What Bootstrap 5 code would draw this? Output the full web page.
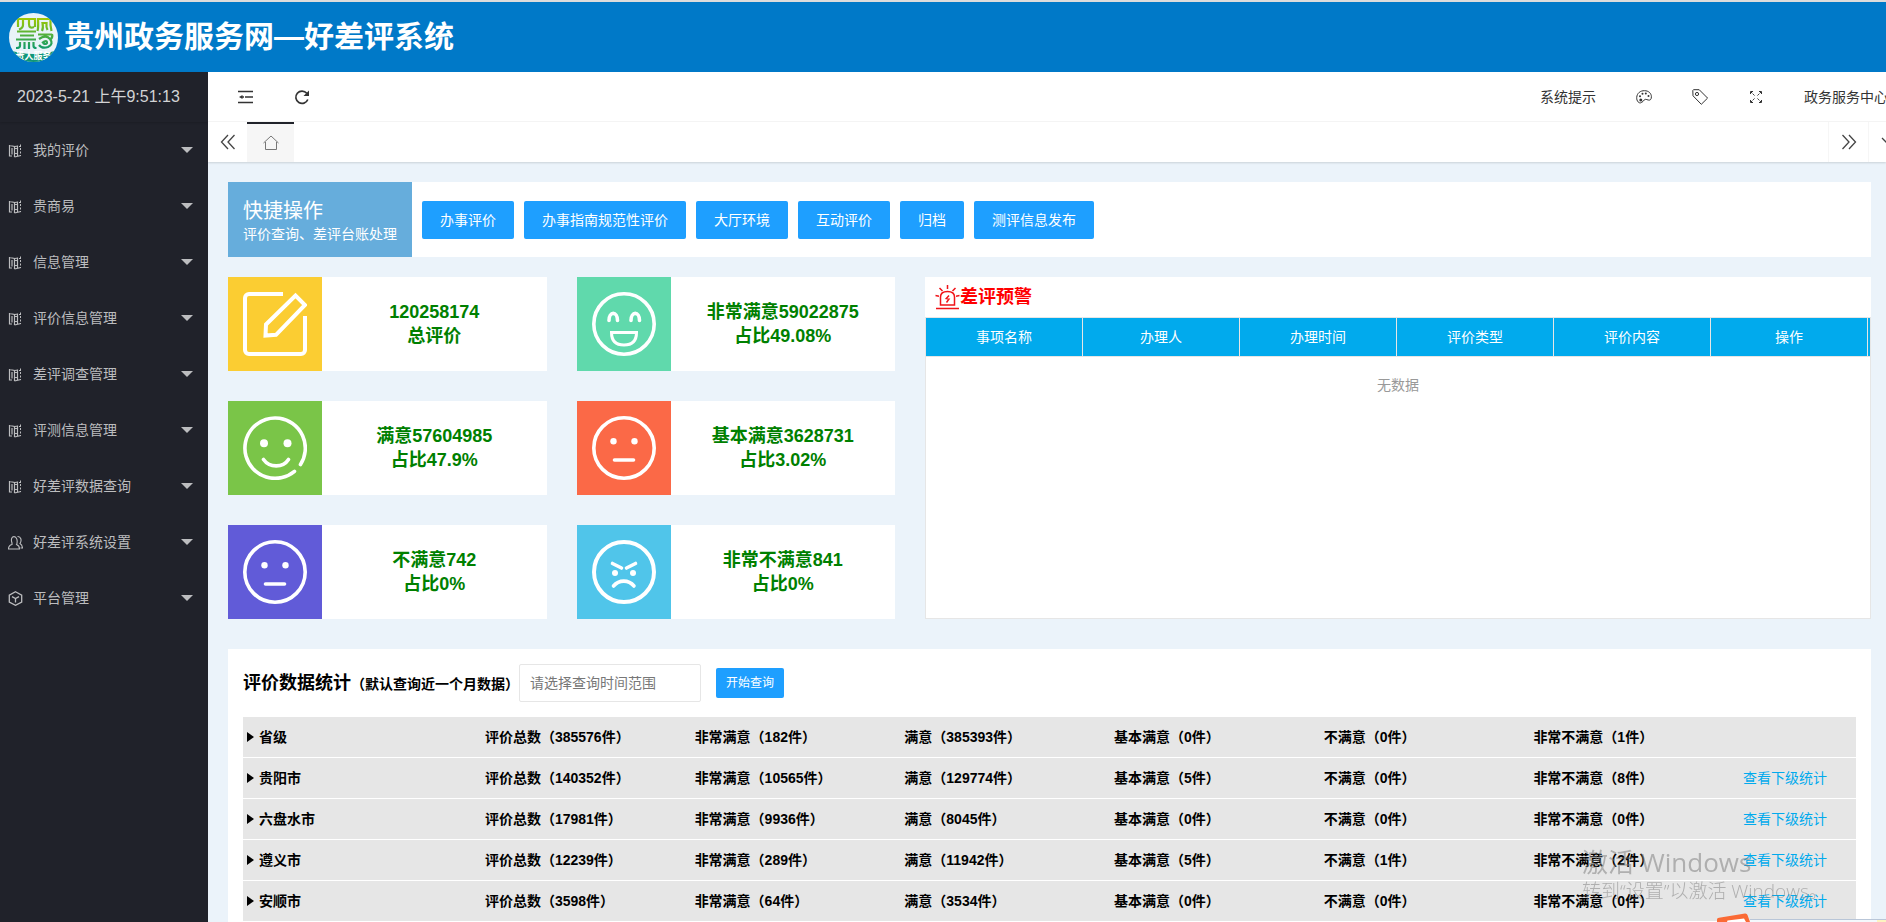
<!DOCTYPE html>
<html lang="zh-CN">
<head>
<meta charset="utf-8">
<meta name="viewport" content="width=device-width, initial-scale=1">
<title>贵州政务服务网—好差评系统</title>
<link rel="stylesheet" href="https://cdn.jsdelivr.net/npm/bootstrap@5.3.0/dist/css/bootstrap.min.css">
<script src="https://cdn.jsdelivr.net/npm/bootstrap@5.3.0/dist/js/bootstrap.bundle.min.js"></script>
<style>
body { font: 14px/24px "Liberation Sans", "Noto Sans CJK SC", sans-serif; color: #333; background: #ebf3fa; overflow-x: hidden; }
a { text-decoration: none; color: inherit; }
svg { display: block; flex-shrink: 0; }
.line-icon { fill: none; stroke: currentColor; stroke-width: 1; }

.site-head { height: 72px; background: #0079c8; color: #fff; border-top: 2px solid #dcdcdc; padding-left: 9px; gap: 6px; }
.site-title { font-size: 30px; line-height: 40px; font-weight: 700; }

.side { width: 208px; background: #20222a; color: #bcbdbf; }
.clock { height: 50px; padding: 0 17px; font-size: 16px; line-height: 50px; color: #d2d3d4; box-shadow: 0 1px 2px rgba(0,0,0,.15); }
.menu-link { height: 56px; padding: 0 15px 0 8px; color: inherit; }
.menu-link .line-icon { width: 15px; height: 15px; margin-right: 10px; }
.caret { border: 6px solid transparent; border-top-color: #bcbdbf; border-bottom: 0; }

.topbar { height: 50px; padding-left: 10px; background: #fff; border-bottom: 1px solid #f6f6f6; }
.tool-link { width: 56px; }
.user-link { width: 102px; padding-left: 20px; }
.tabs-row { height: 40px; background: #fff; box-shadow: 0 1px 2px rgba(0,0,0,.14); color: #444; }
.tab-arrow { width: 39px; }
.tab-home { width: 47px; background: #f6f6f6; border-top: 2px solid #20222a; color: #777; }
.tab-side { width: 40px; border-left: 1px solid #f6f6f6; }
.tab-cut { width: 18px; padding-left: 12px; border-left: 1px solid #f6f6f6; }

.content-area { padding: 20px 15px 0 20px; }
.quick-head { width: 184px; height: 75px; padding: 3px 15px 0; background: #66addc; color: #fff; line-height: 20px; }
.quick-head h2 { font-size: 20px; line-height: 26px; font-weight: 400; }
.quick-list { gap: 10px; margin-left: 10px; }
.btn-quick { --bs-btn-bg: #1e9fff; --bs-btn-color: #fff; --bs-btn-hover-bg: #4bb2ff; --bs-btn-hover-color: #fff; --bs-btn-border-width: 0; --bs-btn-border-radius: 2px; --bs-btn-font-size: 14px; --bs-btn-padding-x: 18px; --bs-btn-padding-y: 0; --bs-btn-line-height: 38px; }
.btn-query { --bs-btn-font-size: 12px; --bs-btn-padding-x: 10px; --bs-btn-line-height: 30px; margin-left: 15px; }

.board { display: grid; grid-template-columns: 100fr 100fr 297fr; gap: 30px; margin-top: 20px; }
.stat-card { height: 94px; background: #fff; }
.stat-icon { width: 94px; padding: 15px; }
.stat-icon svg { width: 64px; height: 64px; fill: none; stroke: #fff; stroke-width: 3.6; stroke-linecap: round; }
.stat-icon .dot { fill: #fff; stroke: none; }
.stat-text { font-size: 18px; line-height: 24px; font-weight: 700; color: green; text-align: center; }
.c-yellow { background: #fbcd32; } .c-mint { background: #60d9ac; } .c-green { background: #7ac548; }
.c-orange { background: #fb6947; } .c-violet { background: #615bd8; } .c-sky { background: #50c5ea; }

.alert-panel { grid-column: 3; grid-row: 1 / span 3; background: #fff; }
.alert-title { height: 40px; padding: 0 10px; font-size: 18px; font-weight: 700; color: #f00; }
.alert-box { border: 1px solid #e6e6e6; }
.alert-table { width: 100%; table-layout: fixed; border-collapse: separate; border-spacing: 0; }
.alert-table th { height: 39px; background: #01aaed; color: #fff; font-weight: 400; text-align: center; padding: 0; border-right: 1px solid #e6e6e6; border-bottom: 1px solid #e6e6e6; }
.alert-table .patch { width: 2px; border-right: 0; }
.no-data { padding-top: 16px; color: #999; text-align: center; }

.report { margin-top: 30px; padding: 15px 15px 0; background: #fff; color: #000; }
.report h2 { font-size: 18px; line-height: 24px; font-weight: 700; }
.report h2 span { font-size: 14px; }
.date-input { width: 182px; height: 38px; border: 1px solid #e6e6e6; border-radius: 2px; padding: 0 10px; font-size: 14px; color: #333; }
.date-input::placeholder { color: #777; opacity: 1; }
.area-table { width: 100%; margin-top: 15px; table-layout: fixed; border-collapse: separate; border-spacing: 0; background: #e6e6e6; }
.area-table th, .area-table td { height: 41px; width: 13%; padding: 0; border-bottom: 1px solid #fff; font-weight: 700; white-space: nowrap; }
.area-table th { width: 15%; padding-left: 4px; }
.area-table td:last-child { width: 7%; font-weight: 400; color: #01aaed; }
.area-table th::before { content: ""; display: inline-block; border: 5px solid transparent; border-left: 7px solid #000; border-right: 0; margin-right: 5px; }

.activate { position: fixed; right: 68px; bottom: 19px; width: 236px; color: rgba(120,120,120,.5); font-family: "Open Sans", "Noto Sans CJK SC", sans-serif; font-size: 19px; line-height: 24px; font-weight: 300; white-space: nowrap; pointer-events: none; }
.activate strong { display: block; font-size: 26px; line-height: 34px; font-weight: 400; }
.dock { position: fixed; right: 0; bottom: 0; width: 170px; height: 9px; pointer-events: none; }
</style>
</head>
<body class="min-vh-100 d-flex flex-column">

<svg class="d-none">
  <symbol id="i-book" viewBox="0 0 15 15"><path d="M1.500 2v11h2.500M1.500 2.500l5 1v10.500M6.500 14l6.500-1.500M7 3.500l2.500-.5M4 5v6.500M6 5.500h3.500v5H6M9.500 2.500v10.500" stroke-width="1.200"/><path d="M12.500 1.500v11.500M11 3.500h2" stroke-dasharray="2 1.500"/></symbol>
  <symbol id="i-user" viewBox="0 0 15 15"><path d="M4 8c-3-8.500 6.500-8.500 5 0 0 1-.2 1-.5 1.500 2 .7 3 2 3 4.500H.500c0-2.500 1.500-4 3.500-4.500zM9.500 1.500c3.500-.3 4.500 4 2.500 7 1.500.8 2.300 2 2.500 4.500h-2" stroke-width="1.100"/></symbol>
  <symbol id="i-cube" viewBox="0 0 15 15"><path d="M7.500.8l6.200 3.300v6.900l-6.200 3.300L1.300 11V4.100zM4 5.700l3.500 1.800L11 5.700M7.500 7.500v4" stroke-width="1.300"/></symbol>
</svg>

<header class="site-head d-flex align-items-center">
  <svg width="49" height="49" viewBox="0 0 49 49">
    <defs>
      <clipPath id="logo-clip"><circle cx="24.500" cy="24.500" r="24.500"/></clipPath>
      <linearGradient id="logo-ink" gradientUnits="userSpaceOnUse" x1="0" y1="4" x2="0" y2="36"><stop offset="0" stop-color="#a3cb00"/><stop offset="1" stop-color="#109a6c"/></linearGradient>
    </defs>
    <g clip-path="url(#logo-clip)">
      <rect width="49" height="49" fill="#e9f3f8"/>
      <path d="M0 37q24 8 49 0v12H0z" fill="#109679"/>
      <g fill="none" stroke="url(#logo-ink)" stroke-width="2.200">
        <path d="M9 14V6h17v8M14 7v5q0 3-4 4.500M20 7v4q0 5 5 3M28.500 18q1-3 .5-12h12.500q-.5 6 1 12M33 18q1.500-3 .5-8h4q-.5 4 1 7"/>
        <path d="M8 18.500h19M11 22.500h14M7 26.500h20M11 29v4q0 2-4 2M15.500 29v7M20 29v7M24.500 29v4q0 2 3 2M29 21.500h14M43 21q1 3-1 5M30 26q7-5 11 0t-2 8q-6 2-9-2M33 30q5-4 5 0-1 2-4 0"/>
      </g>
      <text x="24.500" y="46" font-size="9" font-weight="700" fill="#fff" text-anchor="middle">贵人服务</text>
    </g>
  </svg>
  <h1 class="site-title mb-0">贵州政务服务网—好差评系统</h1>
</header>

<div class="d-flex flex-grow-1">
  <aside class="side flex-shrink-0">
    <div class="clock">2023-5-21 上午9:51:13</div>
    <nav class="nav flex-column">
      <a href="#" class="menu-link d-flex align-items-center"><svg class="line-icon"><use href="#i-book"/></svg>我的评价<span class="caret ms-auto"></span></a>
      <a href="#" class="menu-link d-flex align-items-center"><svg class="line-icon"><use href="#i-book"/></svg>贵商易<span class="caret ms-auto"></span></a>
      <a href="#" class="menu-link d-flex align-items-center"><svg class="line-icon"><use href="#i-book"/></svg>信息管理<span class="caret ms-auto"></span></a>
      <a href="#" class="menu-link d-flex align-items-center"><svg class="line-icon"><use href="#i-book"/></svg>评价信息管理<span class="caret ms-auto"></span></a>
      <a href="#" class="menu-link d-flex align-items-center"><svg class="line-icon"><use href="#i-book"/></svg>差评调查管理<span class="caret ms-auto"></span></a>
      <a href="#" class="menu-link d-flex align-items-center"><svg class="line-icon"><use href="#i-book"/></svg>评测信息管理<span class="caret ms-auto"></span></a>
      <a href="#" class="menu-link d-flex align-items-center"><svg class="line-icon"><use href="#i-book"/></svg>好差评数据查询<span class="caret ms-auto"></span></a>
      <a href="#" class="menu-link d-flex align-items-center"><svg class="line-icon"><use href="#i-user"/></svg>好差评系统设置<span class="caret ms-auto"></span></a>
      <a href="#" class="menu-link d-flex align-items-center"><svg class="line-icon"><use href="#i-cube"/></svg>平台管理<span class="caret ms-auto"></span></a>
    </nav>
  </aside>

  <div class="flex-grow-1 overflow-hidden">
    <div class="topbar d-flex align-items-center">
      <a href="#" class="tool-link d-flex justify-content-center" aria-label="收起菜单"><svg width="16" height="16" viewBox="0 0 16 16" fill="none" stroke="#333" stroke-width="1.400"><path d="M0 2.500h15M7 8h8M0 13.500h15"/><path d="M1 8l3.500-2v4z" fill="#333" stroke="none"/><path d="M4 8h2"/></svg></a>
      <a href="#" class="tool-link d-flex justify-content-center" aria-label="刷新"><svg width="16" height="16" viewBox="0 0 16 16" fill="none" stroke="#333" stroke-width="1.700"><path d="M13.800 10.500A6.200 6.200 0 1 1 12.800 4.300"/><path d="M15 1.500v5.500H9.500z" fill="#333" stroke="none"/></svg></a>
      <a href="#" class="ms-auto px-3 me-1 text-nowrap">系统提示</a>
      <a href="#" class="tool-link d-flex justify-content-center" aria-label="主题"><svg class="line-icon" width="16" height="16" viewBox="0 0 16 16"><path d="M5.500 13.500C3 15 .5 12 .7 8.500 1 4 4.500 1.600 8.500 1.700c4 0 6.800 2.500 6.900 6 0 3-1.400 3.800-3.200 3.300-2-.5-3.200-1.300-4 0-.7 1-1.500 1.900-2.700 2.500z"/><g fill="currentColor" stroke="none"><circle cx="4.800" cy="11" r="1.500"/><circle cx="4" cy="7.300" r="1"/><circle cx="6.500" cy="4.700" r="1"/><circle cx="9.800" cy="4.600" r="1"/><circle cx="12.500" cy="7" r="1"/></g></svg></a>
      <a href="#" class="tool-link d-flex justify-content-center" aria-label="便签"><svg class="line-icon" width="16" height="16" viewBox="0 0 16 16"><path d="M.8 1.500L1 6.800l8.300 8.500 6.300-6.200L7.200.7H1.500z"/><circle cx="5" cy="5" r="1.600"/></svg></a>
      <a href="#" class="tool-link d-flex justify-content-center" aria-label="全屏"><svg class="line-icon" width="14" height="14" viewBox="0 0 14 14"><path d="M1.500 4V1.500H4M10 1.500h2.500V4M1.500 10v2.500H4M12.500 10v2.500H10"/><path d="M2 2l3.500 3.500M12 2L8.500 5.500M2 12l3.500-3.500M12 12L8.500 8.500" stroke-dasharray="2 1"/></svg></a>
      <a href="#" class="user-link text-nowrap overflow-hidden">政务服务中心</a>
    </div>
    <div class="tabs-row d-flex align-items-stretch position-relative">
      <a href="#" class="tab-arrow d-flex align-items-center justify-content-center" aria-label="向左"><svg class="line-icon" width="16" height="16" viewBox="0 0 16 16"><path d="M8 1L1.500 8 8 15M14.500 1L8 8l6.500 7" stroke-width="1.300"/></svg></a>
      <a href="#" class="tab-home d-flex align-items-center justify-content-center" aria-label="首页"><svg class="line-icon" width="16" height="16" viewBox="0 0 16 16"><path d="M.5 8L8 1l7.500 7M2.500 7v7.500h11V7"/></svg></a>
      <a href="#" class="tab-side ms-auto d-flex align-items-center justify-content-center" aria-label="向右"><svg class="line-icon" width="16" height="16" viewBox="0 0 16 16"><path d="M1.500 1L8 8l-6.500 7M8 1l6.500 7L8 15" stroke-width="1.300"/></svg></a>
      <a href="#" class="tab-cut d-flex align-items-center overflow-hidden" aria-label="更多"><svg class="line-icon" width="16" height="16" viewBox="0 0 16 16"><path d="M1 4l7 7 7-7" stroke-width="1.300"/></svg></a>
    </div>

    <main class="content-area">
      <section class="d-flex align-items-center bg-white">
        <div class="quick-head d-flex flex-column justify-content-center">
          <h2 class="mb-0">快捷操作</h2>
          <div class="text-nowrap">评价查询、差评台账处理</div>
        </div>
        <div class="quick-list d-flex">
          <button type="button" class="btn btn-quick">办事评价</button>
          <button type="button" class="btn btn-quick">办事指南规范性评价</button>
          <button type="button" class="btn btn-quick">大厅环境</button>
          <button type="button" class="btn btn-quick">互动评价</button>
          <button type="button" class="btn btn-quick">归档</button>
          <button type="button" class="btn btn-quick">测评信息发布</button>
        </div>
      </section>

      <section class="board">
        <div class="stat-card d-flex">
          <div class="stat-icon c-yellow"><svg viewBox="0 0 64 64"><path d="M40 2H6a4 4 0 0 0-4 4v52a4 4 0 0 0 4 4h52a4 4 0 0 0 4-4V24M22.500 43.500l.5-11L52.500 3.500 62 13 33 42.800z" stroke-width="4" stroke-linecap="butt"/></svg></div>
          <div class="stat-text flex-grow-1 align-self-center">120258174<br>总评价</div>
        </div>
        <div class="stat-card d-flex">
          <div class="stat-icon c-mint"><svg viewBox="0 0 64 64"><circle cx="32" cy="32" r="30.200"/><path d="M17 28.500c0-9.500 8.500-9.500 8.500 0M39 28.500c0-9.500 8.500-9.500 8.500 0"/><path d="M19.500 40.500h25q0 12.500-12.500 12.500T19.500 40.500z" stroke-width="3"/></svg></div>
          <div class="stat-text flex-grow-1 align-self-center">非常满意59022875<br>占比49.08%</div>
        </div>
        <div class="stat-card d-flex">
          <div class="stat-icon c-green"><svg viewBox="0 0 64 64"><path d="M57.500 48.500A30.200 30.200 0 1 0 51.500 55.300M20.500 43.500c6 8.500 19.500 8.500 25 0"/><circle class="dot" cx="21" cy="27.300" r="4"/><circle class="dot" cx="44.500" cy="27.300" r="4"/></svg></div>
          <div class="stat-text flex-grow-1 align-self-center">满意57604985<br>占比47.9%</div>
        </div>
        <div class="stat-card d-flex">
          <div class="stat-icon c-orange"><svg viewBox="0 0 64 64"><circle cx="32" cy="32" r="30.200"/><path d="M22.500 44h19"/><circle class="dot" cx="21.500" cy="25.300" r="3.200"/><circle class="dot" cx="42.500" cy="25.300" r="3.200"/></svg></div>
          <div class="stat-text flex-grow-1 align-self-center">基本满意3628731<br>占比3.02%</div>
        </div>
        <div class="stat-card d-flex">
          <div class="stat-icon c-violet"><svg viewBox="0 0 64 64"><circle cx="32" cy="32" r="30.200"/><path d="M22.500 44h19"/><circle class="dot" cx="21.500" cy="25.300" r="3.200"/><circle class="dot" cx="42.500" cy="25.300" r="3.200"/></svg></div>
          <div class="stat-text flex-grow-1 align-self-center">不满意742<br>占比0%</div>
        </div>
        <div class="stat-card d-flex">
          <div class="stat-icon c-sky"><svg viewBox="0 0 64 64"><circle cx="32" cy="32" r="30" stroke-width="4"/><path d="M20.500 23.500l9 4.500M43.500 23.500l-9 4.500M21.500 46c5.500-6.500 15-6.500 20.500 0"/><circle class="dot" cx="23" cy="33" r="3"/><circle class="dot" cx="41" cy="33" r="3"/></svg></div>
          <div class="stat-text flex-grow-1 align-self-center">非常不满意841<br>占比0%</div>
        </div>

        <div class="alert-panel d-flex flex-column">
          <div class="alert-title d-flex align-items-center">
            <svg width="25" height="25" viewBox="0 0 25 25" fill="none" stroke="#f01318" stroke-width="1.500"><path d="M5.500 20V12q0-5.500 7-5.500t7 5.500v8zM1 23.500h23M12.500 0v4M4.500 3l3 3M20.500 3l-3 3M.5 10.500l3.500.7M24.500 10.500l-3.500.7M14 10.500l-2.700 3 2.700.5-2.500 3.500"/></svg>差评预警
          </div>
          <div class="alert-box flex-grow-1">
            <table class="alert-table">
              <thead><tr><th>事项名称</th><th>办理人</th><th>办理时间</th><th>评价类型</th><th>评价内容</th><th>操作</th><th class="patch"></th></tr></thead>
            </table>
            <div class="no-data">无数据</div>
          </div>
        </div>
      </section>

      <section class="report">
        <form class="d-flex align-items-center">
          <h2 class="mb-0"><label for="range">评价数据统计<span>（默认查询近一个月数据）</span></label></h2>
          <input id="range" type="text" class="date-input" placeholder="请选择查询时间范围">
          <button type="button" class="btn btn-quick btn-query">开始查询</button>
        </form>
        <table class="area-table">
          <tbody>
            <tr><th scope="row">省级</th><td>评价总数（385576件）</td><td>非常满意（182件）</td><td>满意（385393件）</td><td>基本满意（0件）</td><td>不满意（0件）</td><td>非常不满意（1件）</td><td></td></tr>
            <tr><th scope="row">贵阳市</th><td>评价总数（140352件）</td><td>非常满意（10565件）</td><td>满意（129774件）</td><td>基本满意（5件）</td><td>不满意（0件）</td><td>非常不满意（8件）</td><td><a href="#">查看下级统计</a></td></tr>
            <tr><th scope="row">六盘水市</th><td>评价总数（17981件）</td><td>非常满意（9936件）</td><td>满意（8045件）</td><td>基本满意（0件）</td><td>不满意（0件）</td><td>非常不满意（0件）</td><td><a href="#">查看下级统计</a></td></tr>
            <tr><th scope="row">遵义市</th><td>评价总数（12239件）</td><td>非常满意（289件）</td><td>满意（11942件）</td><td>基本满意（5件）</td><td>不满意（1件）</td><td>非常不满意（2件）</td><td><a href="#">查看下级统计</a></td></tr>
            <tr><th scope="row">安顺市</th><td>评价总数（3598件）</td><td>非常满意（64件）</td><td>满意（3534件）</td><td>基本满意（0件）</td><td>不满意（0件）</td><td>非常不满意（0件）</td><td><a href="#">查看下级统计</a></td></tr>
          </tbody>
        </table>
      </section>
    </main>
  </div>
</div>

<div class="activate"><strong>激活 Windows</strong>转到“设置”以激活 Windows。</div>
<svg class="dock" viewBox="0 0 170 9">
  <path d="M34 6.500h136V9H34z" fill="#f4f8fc"/><path d="M34 6.500h136" stroke="#b9c6d8"/><path d="M161 7h9v2h-9z" fill="#fdf3c0"/>
  <path d="M1 9V6.500Q1 5 3 4.700L29 .5Q31 .3 31.500 2L34 9z" fill="#fa6a35"/><path d="M11 9l.5-1.500L28 5.500l2 3.500z" fill="#fff"/>
</svg>
</body>
</html>
